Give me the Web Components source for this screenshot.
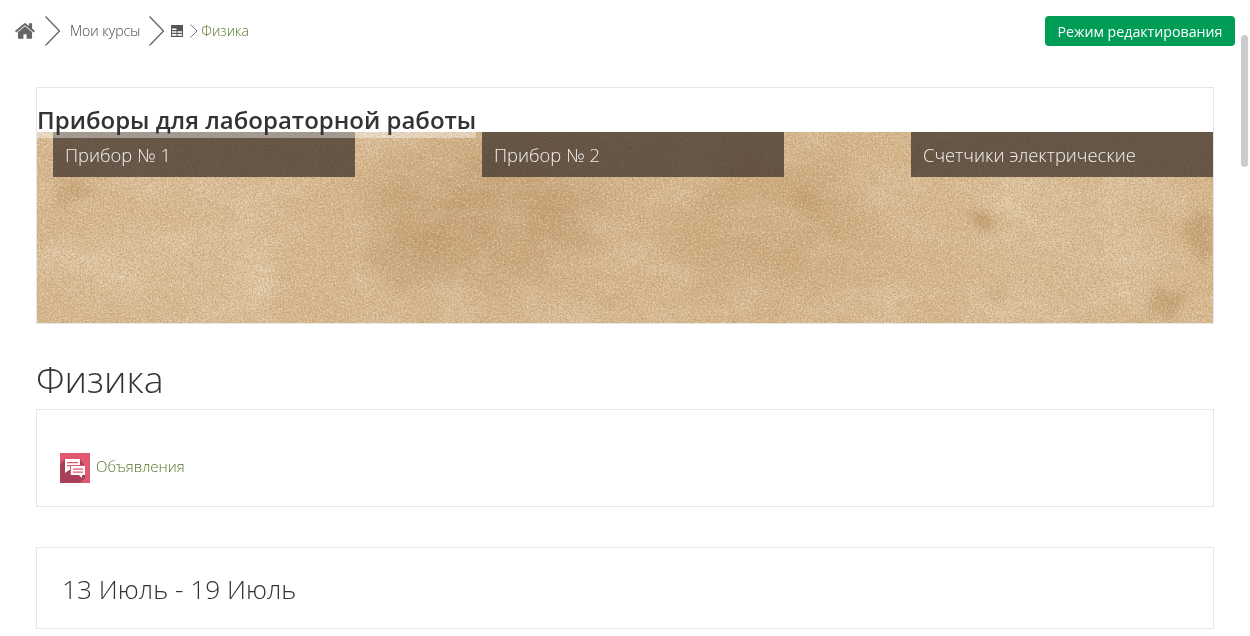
<!DOCTYPE html>
<html lang="ru">
<head>
<meta charset="utf-8">
<title>Физика</title>
<style>
html, body { margin: 0; height: 636px; overflow: hidden; background: #fff; }
body { font-family: "Open Sans", sans-serif; color: #333; }
</style>
</head>
<body>
<course-page></course-page>

<script>
// top bar with the path and the edit button
class CourseHeader extends HTMLElement {
	constructor() {
		super()
		this.attachShadow({mode: "open"}).innerHTML = `
		<style>
			:host { display: flex; align-items: center; justify-content: space-between; height: 30px; padding: 16px 15px 0 15px; }
			nav { display: flex; align-items: center; font-size: 14px; font-weight: 300; color: #444; }
			a { color: inherit; text-decoration: none; position: relative; top: -1px; }
			.current { color: #557623; }
			svg { display: block; }
			.home { margin: 0 9px 0 -1px; }
			.big { margin-right: 10px; }
			.courses { margin-right: 9px; }
			.table { margin: 0 7px 0 7px; }
			.small { margin-right: 3px; }
			button { height: 30px; width: 190px; border: 0; border-radius: 4px; padding: 0; background: #009d57; color: #fff; font: 400 14.2px "Open Sans", sans-serif; }
		</style>
		<nav>
			<svg class="home" width="22" height="22" viewBox="0 0 1792 1792"><path fill="#666" d="M1472 992v480q0 26-19 45t-45 19h-384v-384H768v384H384q-26 0-45-19t-19-45V992q0-1 .5-3t.5-3l575-474 575 474q1 2 1 6zm223-69l-62 74q-8 9-21 11h-3q-13 0-21-7L896 424l-692 577q-12 8-24 7-13-2-21-11l-62-74q-8-10-7-23.500t11-21.500l719-599q32-26 76-26t76 26l244 204V288q0-14 9-23t23-9h192q14 0 23 9t9 23v408l219 182q10 8 11 21.500t-7 23.500z"/></svg>
			<svg class="big" width="15" height="30" viewBox="0 0 15 30"><path fill="none" stroke="#666" stroke-width="1.300" d="M0.500 0.500 14.500 15 0.500 29.500"/></svg>
			<a class="courses" href="#">Мои курсы</a>
			<svg width="15" height="30" viewBox="0 0 15 30"><path fill="none" stroke="#666" stroke-width="1.300" d="M0.500 0.500 14.500 15 0.500 29.500"/></svg>
			<svg class="table" width="12" height="12" viewBox="0 0 12 12"><path fill="#555" d="M0 0h12v12H0z"/><path fill="#fff" d="M1 3.500h4.500v1.500H1zM1 6.200h4.500v1.500H1zM1 8.900h4.500v1.800H1zM6.500 6.200H11v1.500H6.500zM6.500 8.900H11v1.800H6.500z"/></svg>
			<svg class="small" width="8" height="14" viewBox="0 0 8 14"><path fill="none" stroke="#777" d="M0.500 0.500 7 7 0.500 13.500"/></svg>
			<a class="current" href="#">Физика</a>
		</nav>
		<button type="button"><slot></slot></button>`
	}
}

// the sandy picture is drawn here, grain and stains
class SandTexture extends HTMLElement {
	constructor() {
		super()
		this.attachShadow({mode: "open"}).innerHTML = `
		<style>
			:host { display: block; position: absolute; inset: 0; overflow: hidden; }
			svg { display: block; width: 100%; height: 100%; }
		</style>
		<svg viewBox="0 0 1176 191" preserveAspectRatio="none">
			<defs>
				<filter id="grain" x="0" y="0" width="100%" height="100%">
					<feTurbulence type="fractalNoise" baseFrequency="0.65" numOctaves="2" seed="4"/>
					<feColorMatrix values="0 0 0 0 0.42  0 0 0 0 0.25  0 0 0 0 0.1  3 0 0 0 -1.25"/>
				</filter>
				<filter id="grainlight" x="0" y="0" width="100%" height="100%">
					<feTurbulence type="fractalNoise" baseFrequency="0.5" numOctaves="2" seed="15"/>
					<feColorMatrix values="0 0 0 0 0.96  0 0 0 0 0.88  0 0 0 0 0.76  3 0 0 0 -1.3"/>
				</filter>
				<filter id="speck" x="0" y="0" width="100%" height="100%">
					<feTurbulence type="fractalNoise" baseFrequency="0.12" numOctaves="3" seed="21"/>
					<feColorMatrix values="0 0 0 0 0.62  0 0 0 0 0.42  0 0 0 0 0.22  3 0 0 0 -1.35"/>
				</filter>
				<filter id="blotch" x="0" y="0" width="100%" height="100%">
					<feTurbulence type="fractalNoise" baseFrequency="0.012 0.02" numOctaves="5" seed="11"/>
					<feColorMatrix values="0 0 0 0 0.68  0 0 0 0 0.47  0 0 0 0 0.26  2.4 0 0 0 -1"/>
				</filter>
				<filter id="light" x="0" y="0" width="100%" height="100%">
					<feTurbulence type="fractalNoise" baseFrequency="0.016 0.026" numOctaves="4" seed="37"/>
					<feColorMatrix values="0 0 0 0 0.9  0 0 0 0 0.79  0 0 0 0 0.64  2.4 0 0 0 -1.05"/>
				</filter>
				<filter id="rough" x="-30%" y="-60%" width="160%" height="220%">
					<feTurbulence type="fractalNoise" baseFrequency="0.07" numOctaves="3" seed="8" result="n"/>
					<feDisplacementMap in="SourceGraphic" in2="n" scale="34" xChannelSelector="R" yChannelSelector="G"/>
					<feGaussianBlur stdDeviation="4"/>
				</filter>
				<filter id="wide"><feGaussianBlur stdDeviation="26"/></filter>
			</defs>
			<rect width="1176" height="191" fill="#dabb92"/>
			<g filter="url(#wide)">
				<ellipse cx="450" cy="80" rx="120" ry="65" fill="#b88f60" opacity=".7"/>
				<ellipse cx="730" cy="90" rx="110" ry="80" fill="#c29b6c" opacity=".55"/>
				<ellipse cx="130" cy="130" rx="110" ry="50" fill="#e3c9a5" opacity=".6"/>
				<ellipse cx="1040" cy="110" rx="110" ry="60" fill="#e0c5a0" opacity=".6"/>
			</g>
			<rect width="1176" height="191" filter="url(#blotch)" opacity=".5"/>
			<rect width="1176" height="191" filter="url(#light)" opacity=".3"/>
			<g filter="url(#rough)" fill="#ad8350">
				<ellipse cx="35" cy="60" rx="22" ry="12" opacity=".4"/>
				<ellipse cx="375" cy="130" rx="48" ry="26" opacity=".22"/>
				<ellipse cx="1130" cy="170" rx="20" ry="12" opacity=".5"/>
				<ellipse cx="1165" cy="100" rx="16" ry="24" opacity=".45"/>
				<ellipse cx="772" cy="68" rx="12" ry="8" opacity=".6"/>
				<ellipse cx="945" cy="88" rx="14" ry="5" opacity=".6" transform="rotate(30 945 88)"/>
				<ellipse cx="960" cy="165" rx="10" ry="6" opacity=".4"/>
				<ellipse cx="560" cy="168" rx="22" ry="5" opacity=".35"/>
			</g>
			<g filter="url(#rough)" fill="#ecd8b8">
				<ellipse cx="975" cy="78" rx="36" ry="9" opacity=".5" transform="rotate(25 975 78)"/>
				<ellipse cx="555" cy="132" rx="50" ry="4" opacity=".4"/>
				<ellipse cx="225" cy="150" rx="14" ry="30" opacity=".4"/>
			</g>
			<rect width="1176" height="191" filter="url(#speck)" opacity=".35"/>
			<rect width="1176" height="191" filter="url(#grainlight)" opacity=".4"/>
			<rect width="1176" height="191" filter="url(#grain)" opacity=".5"/>
		</svg>`
	}
}

// dark strip with a white label over the picture
class DeviceTile extends HTMLElement {
	constructor() {
		super()
		this.attachShadow({mode: "open"}).innerHTML = `
		<style>
			:host { display: block; width: 302px; height: 45px; box-sizing: border-box; padding-left: 12px; background: rgba(63, 52, 44, .74); color: #f4f2ef; font-size: 18.360px; font-weight: 300; line-height: 46px; white-space: nowrap; }
		</style>
		<slot></slot>`
	}
}

// block with the title and three tiles
class DeviceBanner extends HTMLElement {
	constructor() {
		super()
		this.attachShadow({mode: "open"}).innerHTML = `
		<style>
			:host { display: block; height: 237px; box-sizing: border-box; border: 1px solid #e6e6e6; background: #fff; }
			h3 { position: relative; z-index: 2; box-sizing: border-box; width: fit-content; height: 50px; margin: 0 0 -6px 0; padding-top: 16px; font-size: 24px; font-weight: 600; line-height: 32px; color: #333; background: linear-gradient(#fff 44px, rgba(255, 255, 255, .4) 44px); }
			.picture { position: relative; height: 191px; }
			.tiles { position: relative; display: flex; justify-content: space-between; padding-left: 16px; }
		</style>
		<h3><slot name="title"></slot></h3>
		<div class="picture">
			<sand-texture></sand-texture>
			<div class="tiles"><slot></slot></div>
		</div>`
	}
}

// plain bordered box
class CourseCard extends HTMLElement {
	constructor() {
		super()
		this.attachShadow({mode: "open"}).innerHTML = `
		<style>
			:host { display: block; box-sizing: border-box; border: 1px solid #e6e6e6; background: #fff; }
		</style>
		<slot></slot>`
	}
}

// link to the forum with the pink icon
class ForumLink extends HTMLElement {
	constructor() {
		super()
		this.attachShadow({mode: "open"}).innerHTML = `
		<style>
			:host { display: flex; align-items: flex-start; gap: 6px; font-size: 15px; font-weight: 300; line-height: 26px; color: #557623; }
			svg { display: block; }
		</style>
		<svg width="30" height="30" viewBox="0 0 30 30">
			<rect width="30" height="30" fill="#e25870"/>
			<path fill="#a8405a" d="M5 6 0 11v19h20l5-5V13L20 6z"/>
			<path fill="#fff" d="M5 6h15v10h-8v1H9l-4 3z"/>
			<path fill="#e25870" d="M7 9h11v1.200H7zM7 12h3v1.200H7z"/>
			<path fill="#e25870" d="M10 12h1v10h-1z"/>
			<path fill="#e25870" d="M10 12h15v1h-15z"/>
			<path fill="#fff" d="M11 13h14v9h-3v3l-3-3h-8z"/>
			<path fill="#e25870" d="M13 15.500h10v1.200H13zM13 18.500h10v1.200H13z"/>
		</svg>
		<slot></slot>`
	}
}

class CoursePage extends HTMLElement {
	constructor() {
		super()
		this.attachShadow({mode: "open"}).innerHTML = `
		<style>
			:host { display: block; position: relative; height: 636px; overflow: hidden; font-family: "Open Sans", sans-serif; will-change: transform; }
			main { display: flex; flex-direction: column; padding: 41px 36px 0 36px; }
			h1 { margin: 30px 0 5px 0; font-size: 37.500px; font-weight: 300; line-height: 50px; color: #333; }
			.news { height: 98px; padding: 43px 0 0 23px; box-sizing: border-box; }
			.week { height: 82px; margin-top: 40px; padding: 23px 0 0 25px; box-sizing: border-box; }
			h2 { margin: 0; font-size: 26.300px; font-weight: 300; line-height: 36px; color: #333; }
			.bar { position: absolute; left: 1241px; top: 35px; width: 7px; height: 132px; border-radius: 4px; background: #ccc; }
		</style>
		<course-header>Режим редактирования</course-header>
		<main>
			<device-banner>
				<span slot="title">Приборы для лабораторной работы</span>
				<device-tile>Прибор № 1</device-tile>
				<device-tile>Прибор № 2</device-tile>
				<device-tile>Счетчики электрические</device-tile>
			</device-banner>
			<h1>Физика</h1>
			<course-card class="news"><forum-link>Объявления</forum-link></course-card>
			<course-card class="week"><h2>13 Июль - 19 Июль</h2></course-card>
		</main>
		<div class="bar"></div>`
	}
}

customElements.define("course-header", CourseHeader)
customElements.define("sand-texture", SandTexture)
customElements.define("device-tile", DeviceTile)
customElements.define("device-banner", DeviceBanner)
customElements.define("course-card", CourseCard)
customElements.define("forum-link", ForumLink)
customElements.define("course-page", CoursePage)
</script>
</body>
</html>
